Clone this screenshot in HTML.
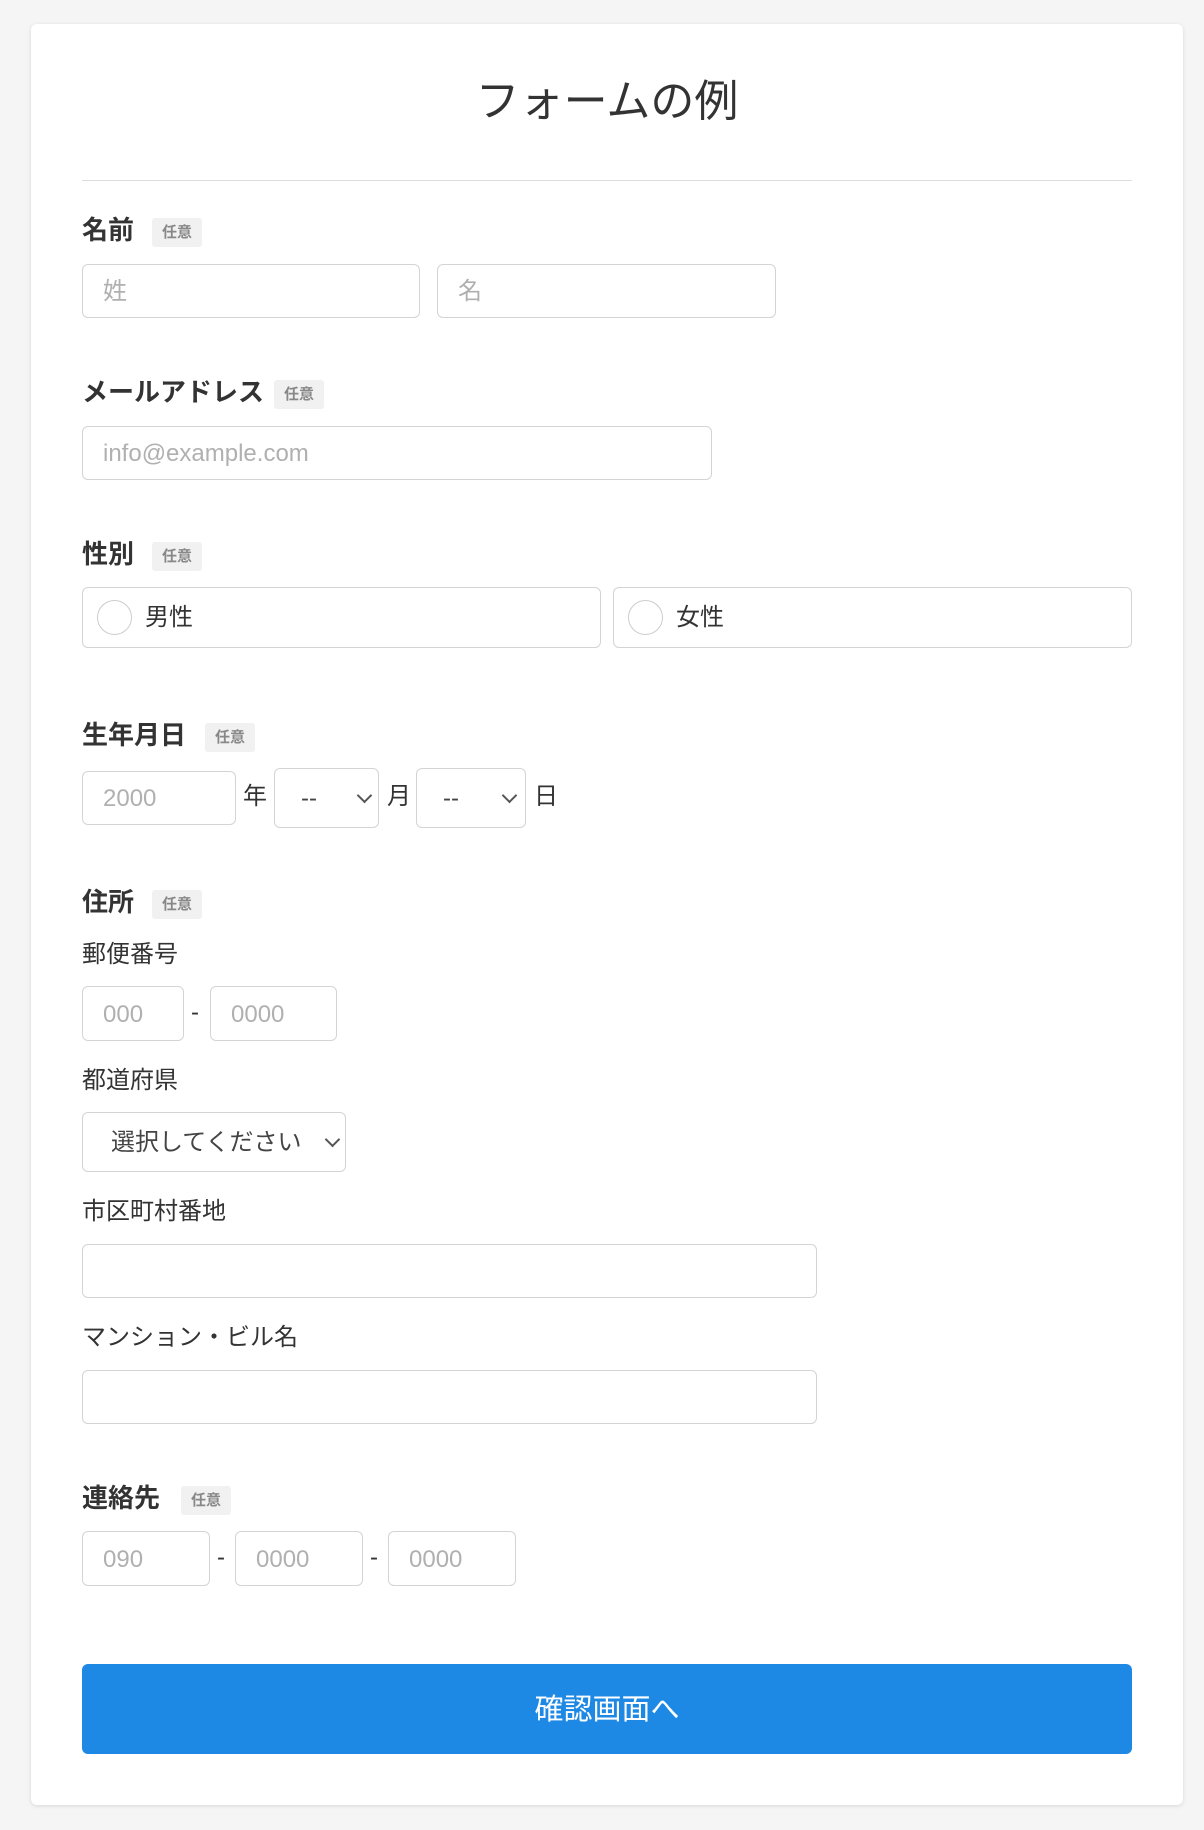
<!DOCTYPE html>
<html><head><meta charset="utf-8"><style>
*{margin:0;padding:0;box-sizing:border-box}
body{width:1204px;height:1830px;background:#f5f5f5;font-family:"Liberation Sans","Noto Sans CJK JP",sans-serif;color:#333;position:relative;overflow:hidden}
.card{position:absolute;left:31px;top:24px;width:1152px;height:1781px;background:#fff;border-radius:6px;box-shadow:0 1px 4px rgba(0,0,0,.12)}
.a{position:absolute}
.t{position:absolute;white-space:nowrap;line-height:1}
.lbl{font-size:26px;font-weight:bold;color:#333}
.sub{font-size:24px;color:#333}
.badge{position:absolute;height:29px;width:50px;background:#f1f1f1;border-radius:3px;font-size:15px;color:#888;font-weight:bold;text-align:center;line-height:29px}
.in{position:absolute;border:1px solid #d4d4d4;border-radius:6px;background:#fff;font-size:24px;color:#b0b0b0;line-height:1;display:flex;align-items:center;padding-left:20px;padding-top:2px}
.chev{position:absolute;width:11px;height:11px;border-right:2px solid #555;border-bottom:2px solid #555;transform:rotate(45deg)}
</style></head><body>
<div class="card"></div>
<div class="t" style="left:0;width:1214px;text-align:center;top:80px;font-size:44px;color:#333">フォームの例</div>
<div class="a" style="left:82px;top:180px;width:1050px;height:1px;background:#ddd"></div>

<div class="t lbl" style="left:82px;top:217px">名前</div>
<div class="badge" style="left:152px;top:218px">任意</div>
<div class="in" style="left:82px;top:264px;width:338px;height:54px">姓</div>
<div class="in" style="left:437px;top:264px;width:339px;height:54px">名</div>

<div class="t lbl" style="left:82px;top:379px">メールアドレス</div>
<div class="badge" style="left:274px;top:380px">任意</div>
<div class="in" style="left:82px;top:426px;width:630px;height:54px">info@example.com</div>

<div class="t lbl" style="left:82px;top:541px">性別</div>
<div class="badge" style="left:152px;top:542px">任意</div>
<div class="in" style="left:82px;top:587px;width:519px;height:61px;color:#333"></div>
<div class="a" style="left:97px;top:600px;width:35px;height:35px;border:1px solid #ccc;border-radius:50%"></div>
<div class="t sub" style="left:145px;top:606px">男性</div>
<div class="in" style="left:613px;top:587px;width:519px;height:61px"></div>
<div class="a" style="left:628px;top:600px;width:35px;height:35px;border:1px solid #ccc;border-radius:50%"></div>
<div class="t sub" style="left:676px;top:606px">女性</div>

<div class="t lbl" style="left:82px;top:722px">生年月日</div>
<div class="badge" style="left:205px;top:723px">任意</div>
<div class="in" style="left:82px;top:771px;width:154px;height:54px">2000</div>
<div class="t sub" style="left:243px;top:785px">年</div>
<div class="in" style="left:274px;top:768px;width:105px;height:60px"></div>
<div class="t sub" style="left:301px;top:787px;color:#444">--</div>
<div class="chev" style="left:359px;top:790px"></div>
<div class="t sub" style="left:387px;top:785px">月</div>
<div class="in" style="left:416px;top:768px;width:110px;height:60px"></div>
<div class="t sub" style="left:443px;top:787px;color:#444">--</div>
<div class="chev" style="left:504px;top:790px"></div>
<div class="t sub" style="left:534px;top:785px">日</div>

<div class="t lbl" style="left:82px;top:889px">住所</div>
<div class="badge" style="left:152px;top:890px">任意</div>
<div class="t sub" style="left:82px;top:943px">郵便番号</div>
<div class="in" style="left:82px;top:986px;width:102px;height:55px">000</div>
<div class="t sub" style="left:191px;top:1001px">-</div>
<div class="in" style="left:210px;top:986px;width:127px;height:55px">0000</div>
<div class="t sub" style="left:82px;top:1069px">都道府県</div>
<div class="in" style="left:82px;top:1112px;width:264px;height:60px;color:#444;font-size:24px;padding-left:28px">選択してください</div>
<div class="chev" style="left:327px;top:1134px"></div>
<div class="t sub" style="left:82px;top:1200px">市区町村番地</div>
<div class="in" style="left:82px;top:1244px;width:735px;height:54px"></div>
<div class="t sub" style="left:82px;top:1326px">マンション・ビル名</div>
<div class="in" style="left:82px;top:1370px;width:735px;height:54px"></div>

<div class="t lbl" style="left:82px;top:1485px">連絡先</div>
<div class="badge" style="left:181px;top:1486px">任意</div>
<div class="in" style="left:82px;top:1531px;width:128px;height:55px">090</div>
<div class="t sub" style="left:217px;top:1546px">-</div>
<div class="in" style="left:235px;top:1531px;width:128px;height:55px">0000</div>
<div class="t sub" style="left:370px;top:1546px">-</div>
<div class="in" style="left:388px;top:1531px;width:128px;height:55px">0000</div>

<div class="a" style="left:82px;top:1664px;width:1050px;height:90px;background:#1e88e5;border-radius:6px;color:#fff;font-size:29px;text-align:center;line-height:92px">確認画面へ</div>
</body></html>
